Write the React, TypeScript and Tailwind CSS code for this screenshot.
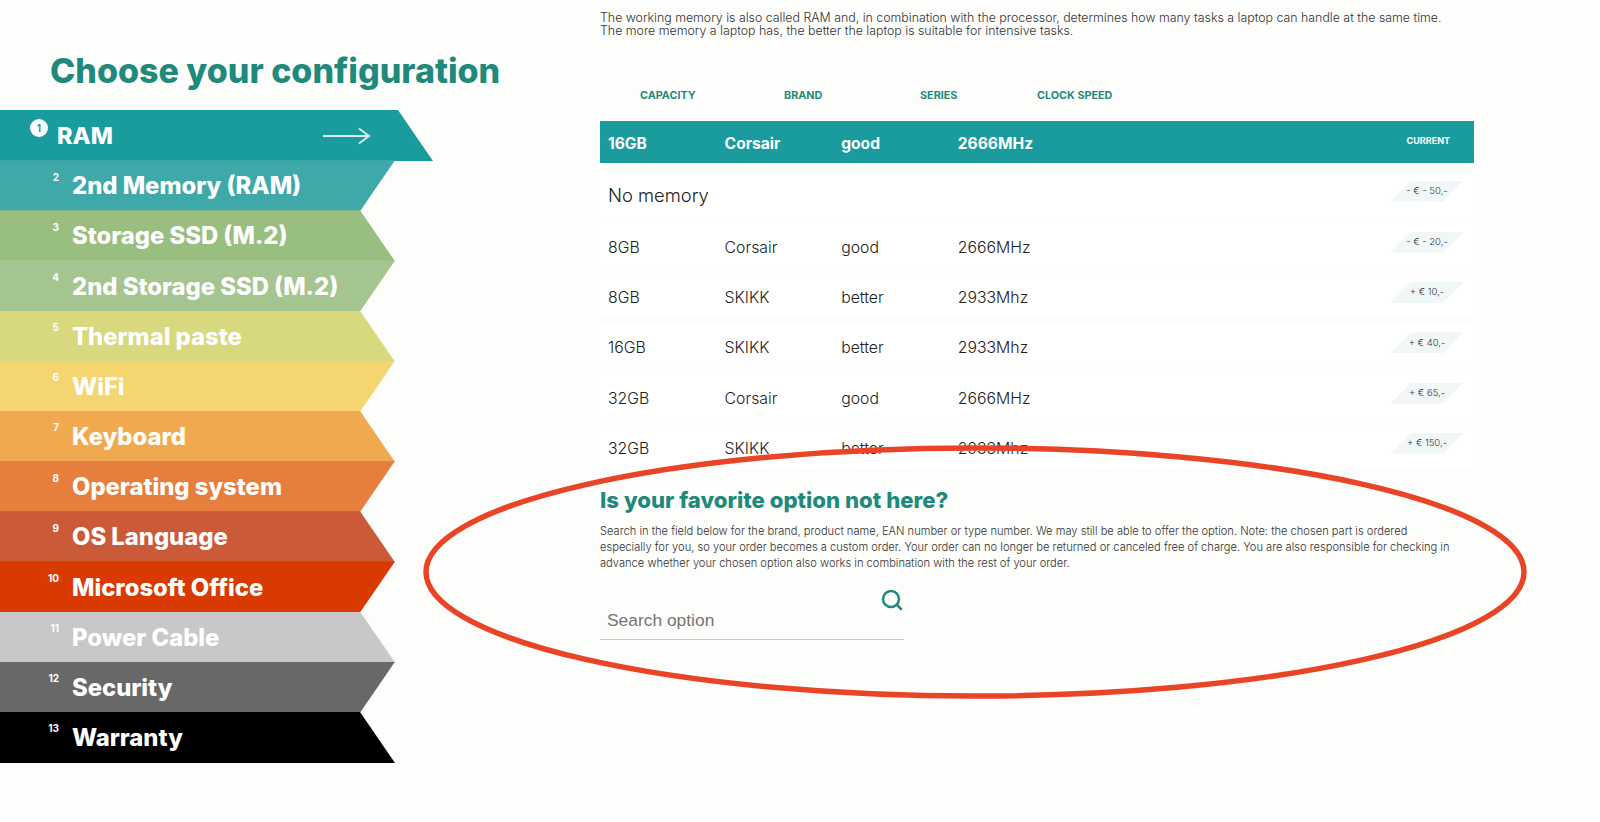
import { Search } from 'lucide-react'

const steps = [
	{ label: 'RAM', color: 'bg-[#1a9c9e]', shape: '[clip-path:polygon(0_0,398px_0,433px_100%,0_100%)]' },
	{ label: '2nd Memory (RAM)', color: 'bg-[#3fa9aa]', shape: '[clip-path:polygon(0_0,395px_0,360px_100%,0_100%)]' },
	{ label: 'Storage SSD (M.2)', color: 'bg-[#98be80]', shape: '[clip-path:polygon(0_0,360px_0,395px_100%,0_100%)]' },
	{ label: '2nd Storage SSD (M.2)', color: 'bg-[#a5c590]', shape: '[clip-path:polygon(0_0,395px_0,360px_100%,0_100%)]' },
	{ label: 'Thermal paste', color: 'bg-[#d8d87e]', shape: '[clip-path:polygon(0_0,360px_0,395px_100%,0_100%)]' },
	{ label: 'WiFi', color: 'bg-[#f4d56f]', shape: '[clip-path:polygon(0_0,395px_0,360px_100%,0_100%)]' },
	{ label: 'Keyboard', color: 'bg-[#f1a950]', shape: '[clip-path:polygon(0_0,360px_0,395px_100%,0_100%)]' },
	{ label: 'Operating system', color: 'bg-[#e67f3d]', shape: '[clip-path:polygon(0_0,395px_0,360px_100%,0_100%)]' },
	{ label: 'OS Language', color: 'bg-[#cb5a38]', shape: '[clip-path:polygon(0_0,360px_0,395px_100%,0_100%)]' },
	{ label: 'Microsoft Office', color: 'bg-[#d83a02]', shape: '[clip-path:polygon(0_0,395px_0,360px_100%,0_100%)]' },
	{ label: 'Power Cable', color: 'bg-[#c8c8c8]', shape: '[clip-path:polygon(0_0,360px_0,395px_100%,0_100%)]' },
	{ label: 'Security', color: 'bg-[#686868]', shape: '[clip-path:polygon(0_0,395px_0,360px_100%,0_100%)]' },
	{ label: 'Warranty', color: 'bg-[#000000]', shape: '[clip-path:polygon(0_0,360px_0,395px_100%,0_100%)]' },
]

const options = [
	['8GB', 'Corsair', 'good', '2666MHz', '- € - 20,-'],
	['8GB', 'SKIKK', 'better', '2933Mhz', '+ € 10,-'],
	['16GB', 'SKIKK', 'better', '2933Mhz', '+ € 40,-'],
	['32GB', 'Corsair', 'good', '2666MHz', '+ € 65,-'],
	['32GB', 'SKIKK', 'better', '2933Mhz', '+ € 150,-'],
]

function Price({ value }: { value: string }) {
	return (
		<div className="ml-auto flex h-[21px] w-[74px] items-center justify-center bg-[#f1f7f7] text-[9.5px] text-[#333] [clip-path:polygon(21px_0,100%_0,53px_100%,0_100%)]">
			{value}
		</div>
	)
}

export default function App() {
	return (
		<div className="relative flex h-[822px] overflow-hidden bg-[#fdfdfb] font-['Inter',sans-serif]">
			<aside className="w-[600px] shrink-0 pt-[47px]">
				<h1 className="pl-[50px] text-[34px] leading-[48px] font-extrabold text-[#1f8a7c]">Choose your configuration</h1>
				<nav className="mt-[15px] flex flex-col">
					{steps.map((step, i) => (
						<div
							key={step.label}
							className={`-mb-[0.85px] flex h-[51px] w-[433px] items-center pt-[1px] text-white ${step.color} ${step.shape}`}
						>
							{i === 0 ? (
								<>
									<span className="mb-4 ml-[30px] flex h-[18px] w-[18px] items-center justify-center rounded-full bg-white text-[10px] font-bold text-[#1a9c9e]">
										1
									</span>
									<span className="ml-[9px] text-[23.5px] font-extrabold">RAM</span>
									<svg className="ml-[209px]" width="50" height="18" viewBox="0 0 50 18" fill="none" stroke="#d5eeee" strokeWidth="1.8">
										<path d="M1 9h46M37 1.5 47 9l-10 7.5" />
									</svg>
								</>
							) : (
								<>
									<span className="mb-[18px] w-[62px] pr-[3px] text-right text-[10px] font-bold">{i + 1}</span>
									<span className="ml-[10px] text-[23.8px] leading-none font-extrabold">{step.label}</span>
								</>
							)}
						</div>
					))}
				</nav>
			</aside>

			<main className="w-[874px] shrink-0 pt-[11px]">
				<p className="text-[12.37px] leading-[13px] font-light text-[#333]">
					The working memory is also called RAM and, in combination with the processor, determines how many tasks a laptop can handle at the same time.
					<br />
					The more memory a laptop has, the better the laptop is suitable for intensive tasks.
				</p>

				<div className="mt-[52px] flex h-[14px] items-center text-[10.8px] font-bold text-[#1f8a7c]">
					<span className="ml-10 w-[144px]">CAPACITY</span>
					<span className="w-[136px]">BRAND</span>
					<span className="w-[117px]">SERIES</span>
					<span>CLOCK SPEED</span>
				</div>

				<div className="mt-[18px] flex h-[42px] items-center bg-[#1a9c9e] pt-[4px] pl-2 text-[15.6px] font-bold text-white">
					<span className="w-[116.6px]">16GB</span>
					<span className="w-[116.6px]">Corsair</span>
					<span className="w-[116.6px]">good</span>
					<span>2666MHz</span>
					<span className="mr-[24px] mb-[6px] ml-auto text-[9px]">CURRENT</span>
				</div>

				<div className="mt-[9px] flex flex-col gap-2 text-[15.8px] font-light text-[#222]">
					<div className="flex h-[44px] items-center bg-white pt-[4px] pr-[10px] pl-2">
						<span className="text-[18.4px]">No memory</span>
						<div className="mb-[10px] ml-auto">
							<Price value="- € - 50,-" />
						</div>
					</div>
					{options.map((row) => (
						<div key={row[0] + row[1]} className="flex h-[42.3px] items-center bg-white pt-[5px] pr-[10px] pl-2">
							<span className="w-[116.6px]">{row[0]}</span>
							<span className="w-[116.6px]">{row[1]}</span>
							<span className="w-[116.6px]">{row[2]}</span>
							<span>{row[3]}</span>
							<div className="mb-[11px] ml-auto">
								<Price value={row[4]} />
							</div>
						</div>
					))}
				</div>

				<h2 className="mt-[19px] text-[22.2px] leading-[28px] font-extrabold text-[#1f8a7c]">Is your favorite option not here?</h2>
				<p className="mt-[9px] text-[11.14px] leading-[16px] font-light text-[#333]">
					Search in the field below for the brand, product name, EAN number or type number. We may still be able to offer the option. Note: the chosen part is ordered
					<br />
					especially for you, so your order becomes a custom order. Your order can no longer be returned or canceled free of charge. You are also responsible for checking in
					<br />
					advance whether your chosen option also works in combination with the rest of your order.
				</p>

				<div className="relative mt-[14px] flex h-[55px] w-[304px] items-end border-b border-[#c8c8c8] pb-[7px] pl-[7px]">
					<span className="font-['Liberation_Sans',sans-serif] text-[17.4px] leading-[24px] text-[#757575]">Search option</span>
					<Search className="absolute top-[3px] right-0 text-[#1f8a7c]" size={24} strokeWidth={2.5} />
				</div>
			</main>

			<svg className="pointer-events-none absolute inset-0" width="1600" height="822" fill="none">
				<ellipse cx="975" cy="572" rx="549" ry="124" stroke="#e94425" strokeWidth="5.5" />
			</svg>
		</div>
	)
}
